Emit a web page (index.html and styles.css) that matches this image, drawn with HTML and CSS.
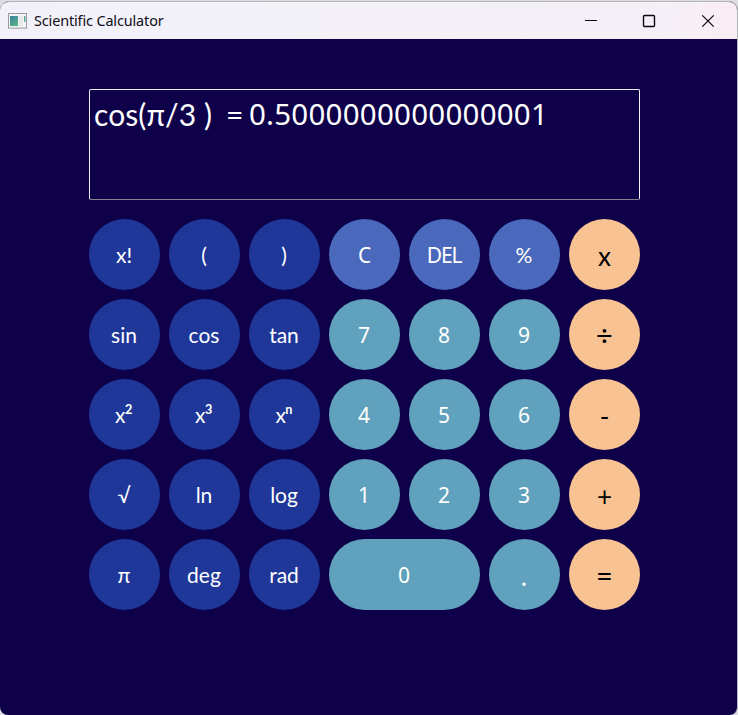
FILE: index.html
```html
<!DOCTYPE html>
<html lang="en">
<head>
<meta charset="utf-8">
<title>Scientific Calculator</title>
<link rel="stylesheet" href="styles.css">
</head>
<body>
<div class="window">
  <header class="titlebar">
    <svg class="app-icon" width="19" height="16" viewBox="0 0 19 16">
      <defs>
        <linearGradient id="pane" x1="0" y1="0" x2="0.6" y2="1"><stop offset="0" stop-color="#3f7fa3"/><stop offset="1" stop-color="#56b184"/></linearGradient>
      </defs>
      <rect x="0.5" y="0.5" width="18" height="14.6" fill="#f4f4f4" stroke="#969ba2"/>
      <rect x="2" y="3" width="8" height="10" fill="url(#pane)"/>
      <rect x="11" y="3" width="4" height="10" fill="#e6e8e8"/>
      <rect x="16" y="3" width="1.5" height="6" fill="#5bab95"/>
    </svg>
    <h1 class="title">Scientific Calculator</h1>
    <svg class="controls" width="132" height="14" viewBox="0 0 132 14" fill="none" stroke="#0b0711" stroke-width="1.2">
      <path d="M0 6.5h12"/>
      <rect x="58.5" y="1.5" width="11" height="11" rx="1" stroke-width="1.4"/>
      <path d="M117.3 1.3l11.4 11.4M128.7 1.3L117.3 12.7"/>
    </svg>
  </header>
  <main class="calculator">
    <div class="display"><span class="expr">cos(π/3 )</span><span class="eq">=</span><span class="result">0.5000000000000001</span></div>
    <div class="keys">
      <button class="key fn">x!</button><button class="key fn">(</button><button class="key fn">)</button><button class="key edit">C</button><button class="key edit">DEL</button><button class="key edit pct">%</button><button class="key op">x</button>
      <button class="key fn">sin</button><button class="key fn">cos</button><button class="key fn">tan</button><button class="key">7</button><button class="key">8</button><button class="key">9</button><button class="key op sign">÷</button>
      <button class="key fn">x<span class="power">²</span></button><button class="key fn">x<span class="power">³</span></button><button class="key fn">x<span class="power">ⁿ</span></button><button class="key">4</button><button class="key">5</button><button class="key">6</button><button class="key op">-</button>
      <button class="key fn">√</button><button class="key fn">ln</button><button class="key fn">log</button><button class="key">1</button><button class="key">2</button><button class="key">3</button><button class="key op">+</button>
      <button class="key fn">π</button><button class="key fn">deg</button><button class="key fn">rad</button><button class="key wide">0</button><button class="key dot">.</button><button class="key op sign">=</button>
    </div>
  </main>
</div>
</body>
</html>
```
FILE: styles.css
```css
* { box-sizing: border-box; }
body { margin: 0; padding-top: 1px; background: #dedde2; width: 738px; height: 715px; overflow: hidden; }
.window { width: 738px; height: 714px; border: 1px solid #b5b4b9; border-width: 1px 1px 0 0; border-radius: 9px 9px 8px 8px; background: #0f0149; overflow: hidden; }
.titlebar { display: flex; align-items: center; height: 37px; padding: 0 20px 0 8px; background: linear-gradient(100deg, #f2f1f9 0%, #f5f0f8 88%, #faedf5 100%); }
.app-icon { flex: none; }
.title { margin: 0 auto 0 7px; font: 400 14.4px/20px "Noto Sans", sans-serif; letter-spacing: -0.12px; color: #100d16; white-space: nowrap; }
.controls { flex: none; }
.calculator { width: 551px; margin: 50px 0 0 89px; }
.display { display: flex; height: 111px; padding: 5px 0 0 4px; border: 1px solid #f1f0f5; border-bottom-color: #87848f; border-radius: 2px; color: #fff; font: 400 30px/38px Lato, sans-serif; white-space: pre; }
.expr { width: 118px; letter-spacing: 0.1px; }
.eq { width: 23px; margin-left: 14px; }
.result { font-family: "Noto Sans", sans-serif; font-size: 29.5px; letter-spacing: 0.24px; }
.keys { display: grid; grid-template-columns: repeat(7, 71px); grid-auto-rows: 71px; gap: 9px; margin-top: 19px; }
.key { display: flex; align-items: center; justify-content: center; padding: 1px 1px 0 0; border: 0; border-radius: 36px; background: #60a2bd; color: #fff; font: 400 21px/28px "Noto Sans", sans-serif; }
.fn { background: #1f3799; font-family: Lato, "Noto Sans", sans-serif; }
.power { font-size: 25px; margin-left: -1px; }
.edit { background: #4b69bc; letter-spacing: -1.2px; }
.pct { font-family: Lato, sans-serif; letter-spacing: 0; }
.op { padding: 3px 0 0; background: #f9c292; color: #000; font-family: Lato, sans-serif; font-size: 26px; }
.sign { font-size: 29px; padding-top: 1px; }
.wide { grid-column: span 2; }
.dot { padding-top: 3px; font-size: 26px; }
```
